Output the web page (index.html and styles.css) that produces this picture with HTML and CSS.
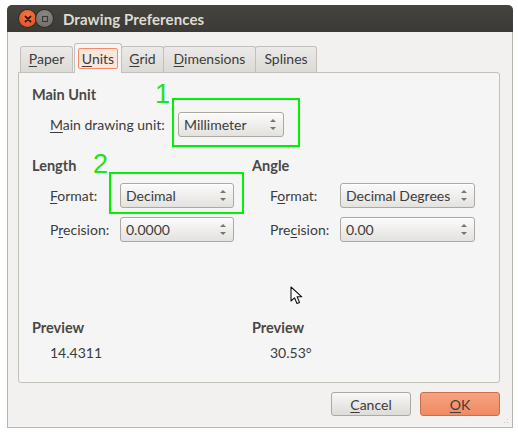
FILE: index.html
```html
<!DOCTYPE html>
<html>
<head>
<meta charset="utf-8">
<link rel="stylesheet" href="styles.css">
</head>
<body>
<div class="window">
  <div class="titlebar">
    <span class="wbtn close"><svg width="16" height="16" viewBox="0 0 16 16"><path d="M5.5 5.5l5 5M10.5 5.5l-5 5" stroke="#3a1a10" stroke-width="1.8" stroke-linecap="round"/></svg></span>
    <span class="wbtn min"><svg width="16" height="16" viewBox="0 0 16 16"><rect x="5.5" y="5.5" width="5" height="5" fill="none" stroke="#3b3a36" stroke-width="1.2"/></svg></span>
    <span class="title">Drawing Preferences</span>
  </div>
  <div class="body">
    <div class="tabs">
      <div class="tab t-paper"><span><u>P</u>aper</span></div>
      <div class="tab t-units active"><span class="focus"><u>U</u>nits</span></div>
      <div class="tab t-grid"><span><u>G</u>rid</span></div>
      <div class="tab t-dim"><span><u>D</u>imensions</span></div>
      <div class="tab t-spl"><span>Splines</span></div>
    </div>
    <div class="panel">
      <section class="main">
        <h3>Main Unit</h3>
        <div class="row main-row">
          <label><u>M</u>ain drawing unit:</label>
          <div class="combo w-main"><span>Millimeter</span><i class="arrows"></i></div>
        </div>
      </section>
      <div class="cols">
        <section class="col">
          <h3 class="sec">Length</h3>
          <div class="row frow">
            <label><u>F</u>ormat:</label>
            <div class="combo w-left"><span>Decimal</span><i class="arrows"></i></div>
          </div>
          <div class="row frow second">
            <label>P<u>r</u>ecision:</label>
            <div class="combo w-left"><span>0.0000</span><i class="arrows"></i></div>
          </div>
        </section>
        <section class="col">
          <h3 class="sec">Angle</h3>
          <div class="row frow">
            <label>F<u>o</u>rmat:</label>
            <div class="combo w-right"><span>Decimal Degrees</span><i class="arrows"></i></div>
          </div>
          <div class="row frow second">
            <label>Pre<u>c</u>ision:</label>
            <div class="combo w-right"><span>0.00</span><i class="arrows"></i></div>
          </div>
        </section>
      </div>
      <div class="cols previews">
        <section class="col">
          <h3>Preview</h3>
          <div class="value">14.4311</div>
        </section>
        <section class="col">
          <h3>Preview</h3>
          <div class="value">30.53°</div>
        </section>
      </div>
    </div>
    <div class="buttons">
      <button class="btn"><u>C</u>ancel</button>
      <button class="btn ok"><u>O</u>K</button>
    </div>
  </div>
  <div class="grip"></div>

  <span class="note n1">1</span>
  <span class="note n2">2</span>
  <div class="hl hl1"></div>
  <div class="hl hl2"></div>
  <svg class="cursor" width="14" height="20" viewBox="0 0 14 20"><path d="M1 1 L1 15 L4.5 11.8 L7 17.5 L9.5 16.4 L7.1 10.8 L11.8 10.8 Z" fill="#fff" stroke="#111" stroke-width="1.1" stroke-linejoin="round"/></svg>
</div>
</body>
</html>
```
FILE: styles.css
```css
* { box-sizing: border-box; }
html, body { margin: 0; padding: 0; background: #ffffff; }
body {
  padding: 5px 5px 6px 7px;
  font-family: Lato, "Open Sans", sans-serif;
  font-size: 14px;
  color: #3c3c3c;
}
u { text-decoration: underline; text-underline-offset: 2px; }

.window {
  position: relative;
  width: 506px;
  height: 423px;
  background: #f2f1f0;
  border: 1px solid #b8b5ae;
  border-top: none;
  border-radius: 5px 5px 0 0;
  display: flex;
  flex-direction: column;
}

.titlebar {
  height: 27px;
  flex: none;
  background: linear-gradient(#45443f, #3b3a36);
  border-radius: 5px 5px 0 0;
  margin: 0 -1px;
  display: flex;
  align-items: center;
  padding-left: 12px;
}
.wbtn {
  width: 17px; height: 17px; border-radius: 50%;
  display: flex; align-items: center; justify-content: center;
}
.wbtn svg { display: block; }
.close {
  background: radial-gradient(circle at 50% 35%, #f5774a, #dc4a1c);
  box-shadow: 0 0 0 1px #2d2c29;
}
.min {
  background: radial-gradient(circle at 50% 35%, #8c8b85, #6a6964);
  box-shadow: 0 0 0 1px #2d2c29;
}
.title {
  margin-left: 10px;
  color: #dfdbd2;
  font-weight: bold;
  font-size: 15px;
  letter-spacing: 0.1px;
}

.body {
  flex: 1;
  padding: 11px 12px 0 10px;
  display: flex;
  flex-direction: column;
}

.tabs {
  display: flex;
  align-items: flex-end;
  height: 29px;
  padding-left: 2px;
  position: relative;
  z-index: 1;
}
.tab {
  height: 26px;
  display: flex; align-items: center; justify-content: center;
  background: linear-gradient(#ebeae8, #dcdad6);
  border: 1px solid #c3c0ba;
  border-bottom: none;
  border-radius: 3px 3px 0 0;
  margin-right: -1px;
  padding-bottom: 2px;
}
.t-paper { width: 53px; margin-right: 1px; }
.t-units { width: 48px; }
.t-grid { width: 43px; }
.t-dim { width: 93px; }
.t-spl { width: 62px; }
.tab.active {
  height: 30px;
  background: #f5f5f5;
  margin-bottom: -1px;
  border-color: #c3c0ba;
  padding-bottom: 1px;
}
.focus {
  border: 1px solid #ef8d6c;
  background: #fbe6dc;
  border-radius: 2px;
  padding: 0 3px;
  line-height: 19px;
}

.panel {
  height: 311px;
  background: #f5f5f5;
  border: 1px solid #c3c0ba;
  border-radius: 0 3px 3px 3px;
  padding: 13px 0 0 13px;
  display: flex;
  flex-direction: column;
}
h3 {
  margin: 0;
  font-size: 14.5px;
  line-height: 18px;
  font-weight: bold;
  color: #4a4845;
}
.row {
  display: grid;
  align-items: center;
  padding-left: 18px;
}
.row label { white-space: nowrap; }
.main-row {
  margin-top: 8px;
  grid-template-columns: 128px 106px;
}
.cols {
  display: grid;
  grid-template-columns: 220px 1fr;
}
.sec { margin-top: 20px; }
.col .frow { margin-top: 8px; grid-template-columns: 70px 114px; }
.col .frow.second { margin-top: 9px; }
.col + .col .frow { grid-template-columns: 70px 135px; }

.combo {
  height: 25px;
  border: 1px solid #aca9a2;
  border-radius: 3px;
  background: linear-gradient(#fbfbfa, #e3e2df);
  box-shadow: inset 0 1px 0 #fff;
  display: flex;
  align-items: center;
  padding-left: 5px;
  position: relative;
}
.combo span { flex: 1; white-space: nowrap; }
.arrows {
  width: 7px; height: 11px;
  margin-right: 7px;
  position: relative;
}
.arrows::before, .arrows::after {
  content: "";
  position: absolute;
  left: 0.5px;
  border-left: 3px solid transparent;
  border-right: 3px solid transparent;
}
.arrows::before { top: 0; border-bottom: 3.5px solid #77746e; }
.arrows::after { bottom: 0; border-top: 3.5px solid #77746e; }

.previews { margin-top: 77px; }
.value { margin-top: 7px; padding-left: 18px; line-height: 18px; }

.buttons {
  display: flex;
  justify-content: flex-end;
  gap: 9px;
  margin-top: 9px;
}
.btn {
  width: 80px;
  height: 24px;
  font-family: inherit;
  font-size: 14px;
  color: #3c3c3c;
  border: 1px solid #aca9a2;
  border-radius: 3px;
  background: linear-gradient(#f7f7f6, #dedcd8);
  padding: 0;
}
.btn.ok {
  background: linear-gradient(#f7a281, #ef8a63);
  border-color: #c96d4a;
}

.grip {
  position: absolute;
  right: 2px; bottom: 2px;
  width: 10px; height: 10px;
  background-image: radial-gradient(circle, #c9c6c0 0.8px, transparent 1px);
  background-size: 3px 3px;
  clip-path: polygon(100% 0, 100% 100%, 0 100%);
}

.note {
  position: absolute;
  color: #22e022;
  font-family: "Liberation Sans", sans-serif;
  font-size: 27px;
  line-height: 27px;
}
.n1 { left: 147px; top: 76px; }
.n2 { left: 85px; top: 146px; }
.hl {
  position: absolute;
  border: 2px solid #00f000;
}
.hl1 { left: 164px; top: 93px; width: 128px; height: 49px; }
.hl2 { left: 101px; top: 167px; width: 135px; height: 42px; }
.cursor { position: absolute; left: 282px; top: 281px; }
```
